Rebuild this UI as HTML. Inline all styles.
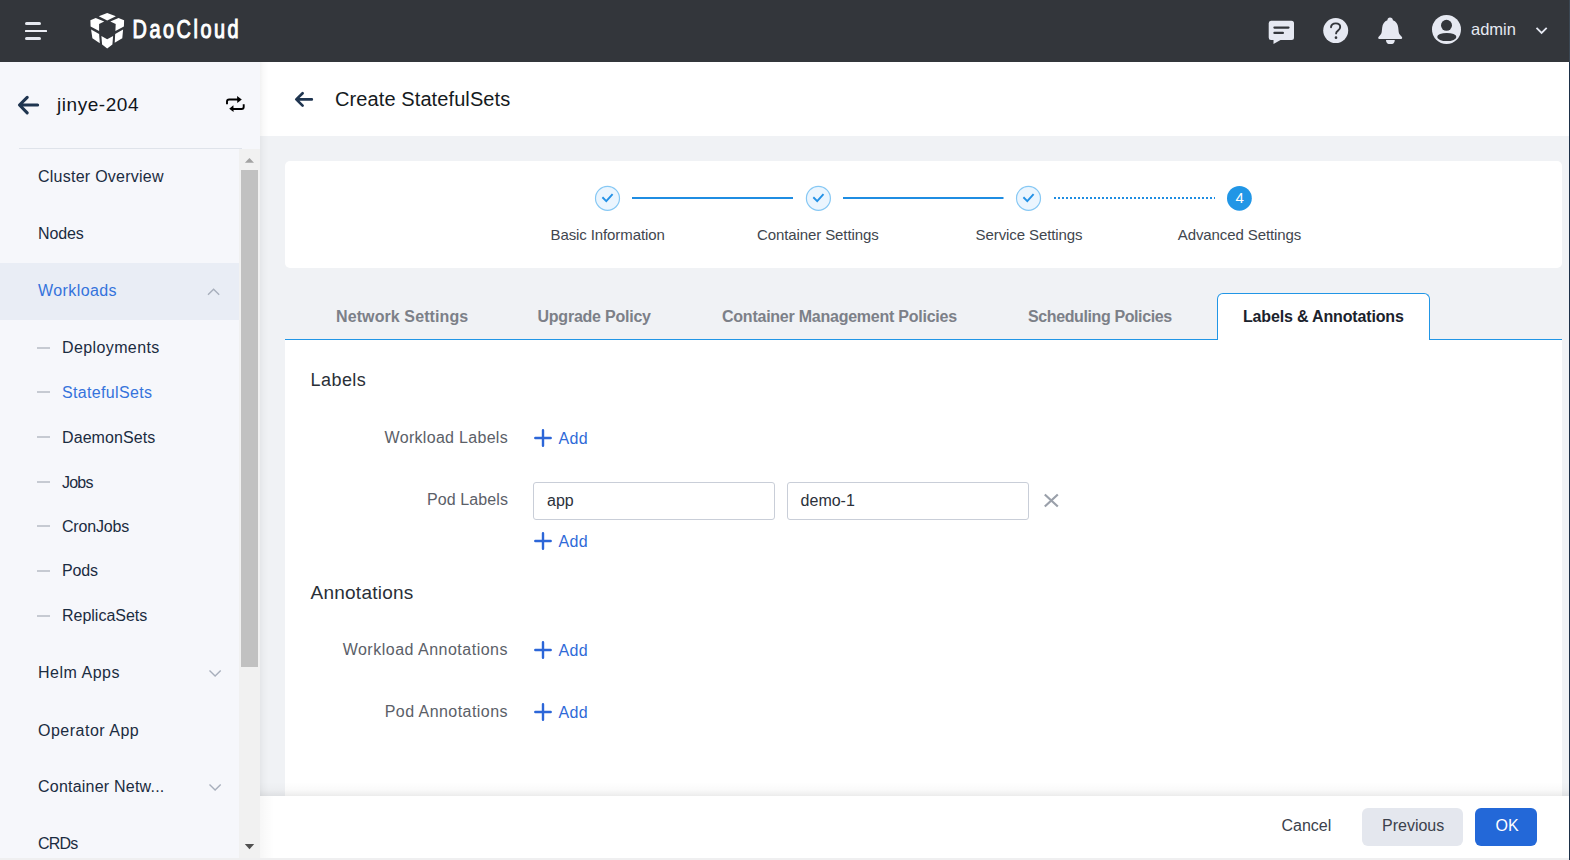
<!DOCTYPE html>
<html><head><meta charset="utf-8">
<style>
*{box-sizing:border-box;margin:0;padding:0}
html,body{width:1570px;height:860px;overflow:hidden;background:#f0f2f5;font-family:"Liberation Sans",sans-serif}
.abs{position:absolute}
.t{position:absolute;white-space:nowrap;line-height:1}
#top{left:0;top:0;width:1569px;height:62px;background:#33363b}
#side{left:0;top:62px;width:260px;height:798px;background:#f6f7fb}
#rshadow{left:260px;top:62px;width:9px;height:798px;background:linear-gradient(to right,rgba(0,0,0,0.05),rgba(0,0,0,0.02) 40%,rgba(0,0,0,0))}
#hdr{left:260px;top:62px;width:1309px;height:74px;background:#fff}
#steps{left:285px;top:161px;width:1277px;height:107px;background:#fff;border-radius:5px}
#content{left:285px;top:340px;width:1277px;height:456px;background:#fff}
#footer{left:260px;top:796px;width:1309px;height:62px;background:#fff}
#fshadow{left:260px;top:782px;width:1309px;height:14px;background:linear-gradient(to bottom,rgba(0,0,0,0),rgba(0,0,0,0.02) 55%,rgba(0,0,0,0.075))}
#bstrip{left:0;top:858px;width:1570px;height:2px;background:#efeff0}
#redge{left:1569px;top:0;width:1px;height:860px;background:linear-gradient(to bottom,#3b4753 0,#3b4753 62px,#1d3048 62px)}
.menu{color:#1b2c41;font-size:16px;letter-spacing:0.3px}
.sub{color:#1b2c41;font-size:16px;letter-spacing:0.25px}
.dash{position:absolute;left:37px;width:13px;height:2px;background:#c6cad2}
.blue{color:#3573dc}
.step{font-size:15px;color:#41464e;letter-spacing:-0.1px}
.tab{font-size:16px;font-weight:bold;color:#7c8088}
.lbl{font-size:16px;color:#5b6068;letter-spacing:0.3px}
.add{font-size:16px;color:#2f6ad8;letter-spacing:0.3px}
.h2{font-size:18px;color:#2a2f37}
</style></head><body>
<div id="top" class="abs"></div>
<div id="side" class="abs"></div>
<div id="hdr" class="abs"></div>
<div id="rshadow" class="abs"></div>
<div id="steps" class="abs"></div>
<div id="content" class="abs"></div>
<div id="fshadow" class="abs"></div>
<div id="footer" class="abs"></div>
<div class="abs" style="left:260px;top:796px;width:14px;height:62px;background:linear-gradient(to right,rgba(0,0,0,0.03),rgba(0,0,0,0))"></div>
<div id="bstrip" class="abs"></div>
<div id="redge" class="abs"></div>

<!-- top bar -->
<div class="abs" style="left:25px;top:22px;width:16px;height:3px;background:#e6e9f0;border-radius:1.5px"></div>
<div class="abs" style="left:25px;top:30px;width:22px;height:2.2px;background:#eceef4;border-radius:0.5px"></div>
<div class="abs" style="left:25px;top:37px;width:16px;height:3px;background:#e6e9f0;border-radius:1.5px"></div>

<svg class="abs" style="left:85px;top:8px" width="45" height="44" viewBox="0 0 45 44">
<g fill="#fff">
<polygon points="13.8,8.2 22.2,4.9 30.9,8.2 22.2,12.5"/>
<polygon points="5.4,12.3 10.7,10 19.2,13.5 14.1,16.1 14.1,23 5.6,18.4"/>
<polygon points="39.1,12.3 33.5,10 25.3,13.5 30.7,16.1 30.4,23 38.9,18.4"/>
<polygon points="6.1,21.5 14.1,26.1 14.8,35.3 7.4,30.2"/>
<polygon points="38.1,21.5 30.2,26.1 29.7,34.8 37.3,30.2"/>
<polygon points="16.4,27.9 22.2,31.2 28.1,27.9 27.4,36.6 22.2,40.4 17.1,36.6"/>
</g></svg>
<svg class="abs" style="left:130px;top:10px" width="115" height="40">
<g transform="translate(2.5,0) scale(0.77,1)"><text x="0" y="28.5" font-family="Liberation Sans" font-size="25.8" fill="#fff" stroke="#fff" stroke-width="1.1" letter-spacing="3.3">DaoCloud</text></g>
</svg>


<!-- top right icons -->
<svg class="abs" style="left:1266px;top:16px" width="32" height="30" viewBox="1266 16 32 30">
<path fill="#e6e9f2" d="M1271,20.7 H1291.5 Q1294,20.7 1294,23.2 V37.5 Q1294,40 1291.5,40 H1280.5 L1273.5,44 V40 H1271 Q1268.7,40 1268.7,37.5 V23.2 Q1268.7,20.7 1271,20.7 Z"/>
<rect x="1273.3" y="26.4" width="16.3" height="2.3" rx="1.1" fill="#33363b"/>
<rect x="1273.3" y="31.8" width="10.7" height="2.3" rx="1.1" fill="#33363b"/>
</svg>
<svg class="abs" style="left:1320px;top:15px" width="32" height="32" viewBox="1320 15 32 32">
<circle cx="1335.7" cy="30.6" r="12.5" fill="#e6e9f2"/>
<path d="M1331,27.2 Q1331.4,23.4 1335.8,23.4 Q1340.2,23.4 1340.2,27 Q1340.2,29.2 1338,30.6 Q1336.1,31.8 1336.1,33.4" fill="none" stroke="#33363b" stroke-width="1.9" stroke-linecap="round"/>
<circle cx="1336" cy="37.7" r="1.35" fill="#33363b"/>
</svg>
<svg class="abs" style="left:1375px;top:15px" width="30" height="32" viewBox="1375 15 30 32">
<path fill="#e6e9f2" d="M1390,17.6 C1391.7,17.6 1392.8,18.7 1392.9,20.3 C1396,21.3 1397.8,24 1398.2,27.5 L1398.7,32 C1399,34 1400.2,35.3 1401.5,36.5 Q1402.3,37.3 1402.2,38 Q1402,38.9 1401,38.9 H1379.3 Q1378.3,38.9 1378.2,38 Q1378.1,37.3 1378.9,36.5 C1380.2,35.3 1381.4,34 1381.7,32 L1382.2,27.5 C1382.6,24 1384.4,21.3 1387.4,20.3 C1387.5,18.7 1388.5,17.6 1390,17.6 Z"/>
<path fill="#e6e9f2" d="M1386,39.9 H1394.8 Q1394.8,44.1 1390.4,44.1 Q1386,44.1 1386,39.9 Z"/>
</svg>
<svg class="abs" style="left:1430px;top:14px" width="34" height="32" viewBox="1430 14 34 32">
<circle cx="1446.5" cy="29.6" r="14.5" fill="#e6e9f2"/>
<circle cx="1446.5" cy="25.3" r="5.5" fill="#33363b"/>
<ellipse cx="1446.8" cy="37" rx="9.6" ry="4.1" fill="#33363b"/>
</svg>
<div class="t" style="left:1471px;top:21px;font-size:16.5px;color:#e6e9f2">admin</div>
<svg class="abs" style="left:1533px;top:24px" width="18" height="14" viewBox="1533 24 18 14">
<path d="M1536.5,27.8 L1541.6,33 L1546.7,27.8" fill="none" stroke="#e6e9f2" stroke-width="1.8"/>
</svg>

<!-- sidebar header -->
<svg class="abs" style="left:15px;top:92px" width="28" height="26" viewBox="15 92 28 26">
<path d="M37.6,105 H20 M27.2,97.3 L19.5,105 L27.2,112.8" fill="none" stroke="#1f3550" stroke-width="3.1" stroke-linecap="round" stroke-linejoin="round"/>
</svg>
<div class="t" style="left:57px;top:95.3px;font-size:19px;color:#11151b;letter-spacing:0.55px">jinye-204</div>
<svg class="abs" style="left:222px;top:92px" width="28" height="26" viewBox="222 92 28 26">
<g fill="none" stroke="#000" stroke-width="1.9">
<path d="M227,104.3 V101.6 Q227,99.5 229.2,99.5 H238"/>
<path d="M243.7,104.3 V107 Q243.7,109 241.6,109 H233"/>
</g>
<polygon points="237.1,96.1 241.8,99.5 237.3,102.9" fill="#000"/>
<polygon points="233.4,105.3 229.2,108.7 233.6,112" fill="#000"/>
</svg>
<div class="abs" style="left:19px;top:148px;width:223px;height:1px;background:#dfe3ea"></div>

<!-- scrollbar -->
<div class="abs" style="left:239px;top:149px;width:21px;height:709px;background:#f1f1f1"></div>
<div class="abs" style="left:241px;top:170px;width:17px;height:497px;background:#c1c1c1"></div>
<svg class="abs" style="left:239px;top:150px" width="21" height="20"><polygon points="5.9,12.8 10.45,7.9 15,12.8" fill="#a3a3a3"/></svg>
<svg class="abs" style="left:239px;top:838px" width="21" height="20"><polygon points="5.8,5.9 15.2,5.9 10.5,11.3" fill="#505050"/></svg>

<!-- sidebar menu -->
<div class="t menu" style="left:38px;top:169.1px;letter-spacing:0.25px">Cluster Overview</div>
<div class="t menu" style="left:38px;top:226.1px;letter-spacing:-0.12px">Nodes</div>
<div class="abs" style="left:0;top:263px;width:239px;height:57px;background:#e9edf5"></div>
<div class="t menu blue" style="left:38px;top:283.1px;letter-spacing:0.41px">Workloads</div>
<svg class="abs" style="left:204px;top:284px" width="20" height="14"><path d="M4,10.8 L9.6,5.2 L15.2,10.8" fill="none" stroke="#a8afbc" stroke-width="1.4"/></svg>
<div class="dash" style="top:346.6px"></div>
<div class="t sub" style="left:62px;top:340.3px;letter-spacing:0.39px">Deployments</div>
<div class="dash" style="top:391.3px"></div>
<div class="t sub blue" style="left:62px;top:385.2px;letter-spacing:0.34px">StatefulSets</div>
<div class="dash" style="top:436.0px"></div>
<div class="t sub" style="left:62px;top:429.7px;letter-spacing:0.09px">DaemonSets</div>
<div class="dash" style="top:480.7px"></div>
<div class="t sub" style="left:62px;top:474.6px;letter-spacing:-0.80px">Jobs</div>
<div class="dash" style="top:525.4px"></div>
<div class="t sub" style="left:62px;top:518.9px;letter-spacing:-0.19px">CronJobs</div>
<div class="dash" style="top:570.1px"></div>
<div class="t sub" style="left:62px;top:563.4px;letter-spacing:-0.15px">Pods</div>
<div class="dash" style="top:614.8px"></div>
<div class="t sub" style="left:62px;top:608.0px;letter-spacing:-0.01px">ReplicaSets</div>
<div class="t menu" style="left:38px;top:665.4px;letter-spacing:0.52px">Helm Apps</div>
<svg class="abs" style="left:205px;top:665.6px" width="20" height="14"><path d="M4.5,4.5 L10.1,10 L15.7,4.5" fill="none" stroke="#a8afbc" stroke-width="1.4"/></svg>
<div class="t menu" style="left:38px;top:722.5px;letter-spacing:0.50px">Operator App</div>
<div class="t menu" style="left:38px;top:779.3px;letter-spacing:0.22px">Container Netw...</div>
<svg class="abs" style="left:205px;top:779.5px" width="20" height="14"><path d="M4.5,4.5 L10.1,10 L15.7,4.5" fill="none" stroke="#a8afbc" stroke-width="1.4"/></svg>
<div class="t menu" style="left:38px;top:836.3px;letter-spacing:-0.80px">CRDs</div>

<!-- page header -->
<svg class="abs" style="left:290px;top:88px" width="28" height="24" viewBox="290 88 28 24">
<path d="M311.8,99.4 H296.5 M302.6,93.2 L296.3,99.4 L302.6,105.6" fill="none" stroke="#1f3550" stroke-width="2.7" stroke-linecap="round" stroke-linejoin="round"/>
</svg>
<div class="t" style="left:335px;top:88.8px;font-size:20px;color:#151a21;letter-spacing:0.1px">Create StatefulSets</div>

<!-- steps -->
<svg class="abs" style="left:285px;top:161px" width="1277" height="107" viewBox="285 161 1277 107">
<g fill="#ebf5fe" stroke="#86c8f4" stroke-width="1.2">
<circle cx="607.5" cy="198.3" r="12"/>
<circle cx="818.4" cy="198.3" r="12"/>
<circle cx="1028.5" cy="198.3" r="12"/>
</g>
<g fill="none" stroke="#2491e6" stroke-width="1.9" stroke-linecap="butt" stroke-linejoin="miter">
<path d="M602.4,197.3 L606.3,201.1 L612.6,194.1"/>
<path d="M813.3,197.3 L817.2,201.1 L823.5,194.1"/>
<path d="M1023.4,197.3 L1027.3,201.1 L1033.6,194.1"/>
</g>
<g stroke="#1f8de2" stroke-width="2">
<line x1="632" y1="198" x2="793" y2="198"/>
<line x1="843" y1="198" x2="1003.5" y2="198"/>
<line x1="1054" y1="198" x2="1215" y2="198" stroke-dasharray="2,2"/>
</g>
<circle cx="1239.4" cy="198.3" r="12.4" fill="#2196e6"/>
<text x="1239.6" y="202.6" text-anchor="middle" font-family="Liberation Sans" font-size="15" fill="#fff">4</text>
</svg>
<div class="t step" style="left:550.5px;top:226.9px">Basic Information</div>
<div class="t step" style="left:757px;top:226.9px">Container Settings</div>
<div class="t step" style="left:975.6px;top:226.9px">Service Settings</div>
<div class="t step" style="left:1177.8px;top:226.9px">Advanced Settings</div>

<!-- tabs -->
<div class="abs" style="left:285px;top:339px;width:1277px;height:1.3px;background:#2196e6"></div>
<div class="abs" style="left:1217px;top:293px;width:213px;height:46.8px;background:#fff;border:1.3px solid #2196e6;border-bottom:none;border-radius:6px 6px 0 0"></div>
<div class="t tab" style="left:336px;top:308.8px;letter-spacing:0.1px">Network Settings</div>
<div class="t tab" style="left:537.5px;top:308.8px;letter-spacing:-0.23px">Upgrade Policy</div>
<div class="t tab" style="left:722px;top:308.8px;letter-spacing:-0.24px">Container Management Policies</div>
<div class="t tab" style="left:1028px;top:308.8px;letter-spacing:-0.39px">Scheduling Policies</div>
<div class="t tab" style="left:1243px;top:308.8px;color:#1b222c;letter-spacing:-0.16px">Labels &amp; Annotations</div>

<!-- content -->
<div class="t h2" style="left:310.5px;top:371px;letter-spacing:0.45px">Labels</div>
<div class="t lbl" style="right:1062px;top:430.1px">Workload Labels</div>
<div class="t lbl" style="right:1062px;top:492.1px;letter-spacing:0.1px">Pod Labels</div>
<div class="abs" style="left:533px;top:482px;width:242px;height:38px;border:1px solid #c9ced8;border-radius:3px;background:#fff"></div>
<div class="abs" style="left:787px;top:482px;width:242px;height:38px;border:1px solid #c9ced8;border-radius:3px;background:#fff"></div>
<div class="t" style="left:547px;top:492.8px;font-size:16px;color:#2b313b">app</div>
<div class="t" style="left:800.6px;top:492.8px;font-size:16px;color:#2b313b">demo-1</div>
<svg class="abs" style="left:1040px;top:490px" width="22" height="22" viewBox="1040 490 22 22">
<path d="M1044.8,494.5 L1057.8,506.5 M1057.8,494.5 L1044.8,506.5" stroke="#9aa0aa" stroke-width="2.2"/>
</svg>
<div class="t h2" style="left:310.5px;top:583px;font-size:19px;letter-spacing:0.25px">Annotations</div>
<div class="t lbl" style="right:1062px;top:642.1px;letter-spacing:0.5px">Workload Annotations</div>
<div class="t lbl" style="right:1062px;top:704.1px;letter-spacing:0.45px">Pod Annotations</div>
<svg class="abs" style="left:533px;top:428.2px" width="20" height="20" viewBox="0 0 20 20"><path d="M10,2.3 V17.7 M2.3,10 H17.7" stroke="#2c66d8" stroke-width="2.4" stroke-linecap="round"/></svg>
<div class="t add" style="left:558.5px;top:431.0px">Add</div>
<svg class="abs" style="left:533px;top:531.2px" width="20" height="20" viewBox="0 0 20 20"><path d="M10,2.3 V17.7 M2.3,10 H17.7" stroke="#2c66d8" stroke-width="2.4" stroke-linecap="round"/></svg>
<div class="t add" style="left:558.5px;top:534.0px">Add</div>
<svg class="abs" style="left:533px;top:640.3px" width="20" height="20" viewBox="0 0 20 20"><path d="M10,2.3 V17.7 M2.3,10 H17.7" stroke="#2c66d8" stroke-width="2.4" stroke-linecap="round"/></svg>
<div class="t add" style="left:558.5px;top:643.1px">Add</div>
<svg class="abs" style="left:533px;top:702.1px" width="20" height="20" viewBox="0 0 20 20"><path d="M10,2.3 V17.7 M2.3,10 H17.7" stroke="#2c66d8" stroke-width="2.4" stroke-linecap="round"/></svg>
<div class="t add" style="left:558.5px;top:704.9px">Add</div>

<!-- footer -->
<div class="t" style="left:1281.5px;top:817.5px;font-size:16px;color:#3b414c">Cancel</div>
<div class="abs" style="left:1362px;top:808px;width:101px;height:38px;background:#e4e7ee;border-radius:6px"></div>
<div class="t" style="left:1382px;top:817.5px;font-size:16px;color:#3b414c">Previous</div>
<div class="abs" style="left:1475px;top:808px;width:62px;height:38px;background:#2368d8;border-radius:6px"></div>
<div class="t" style="left:1495.5px;top:817.5px;font-size:16px;color:#fff">OK</div>
</body></html>
